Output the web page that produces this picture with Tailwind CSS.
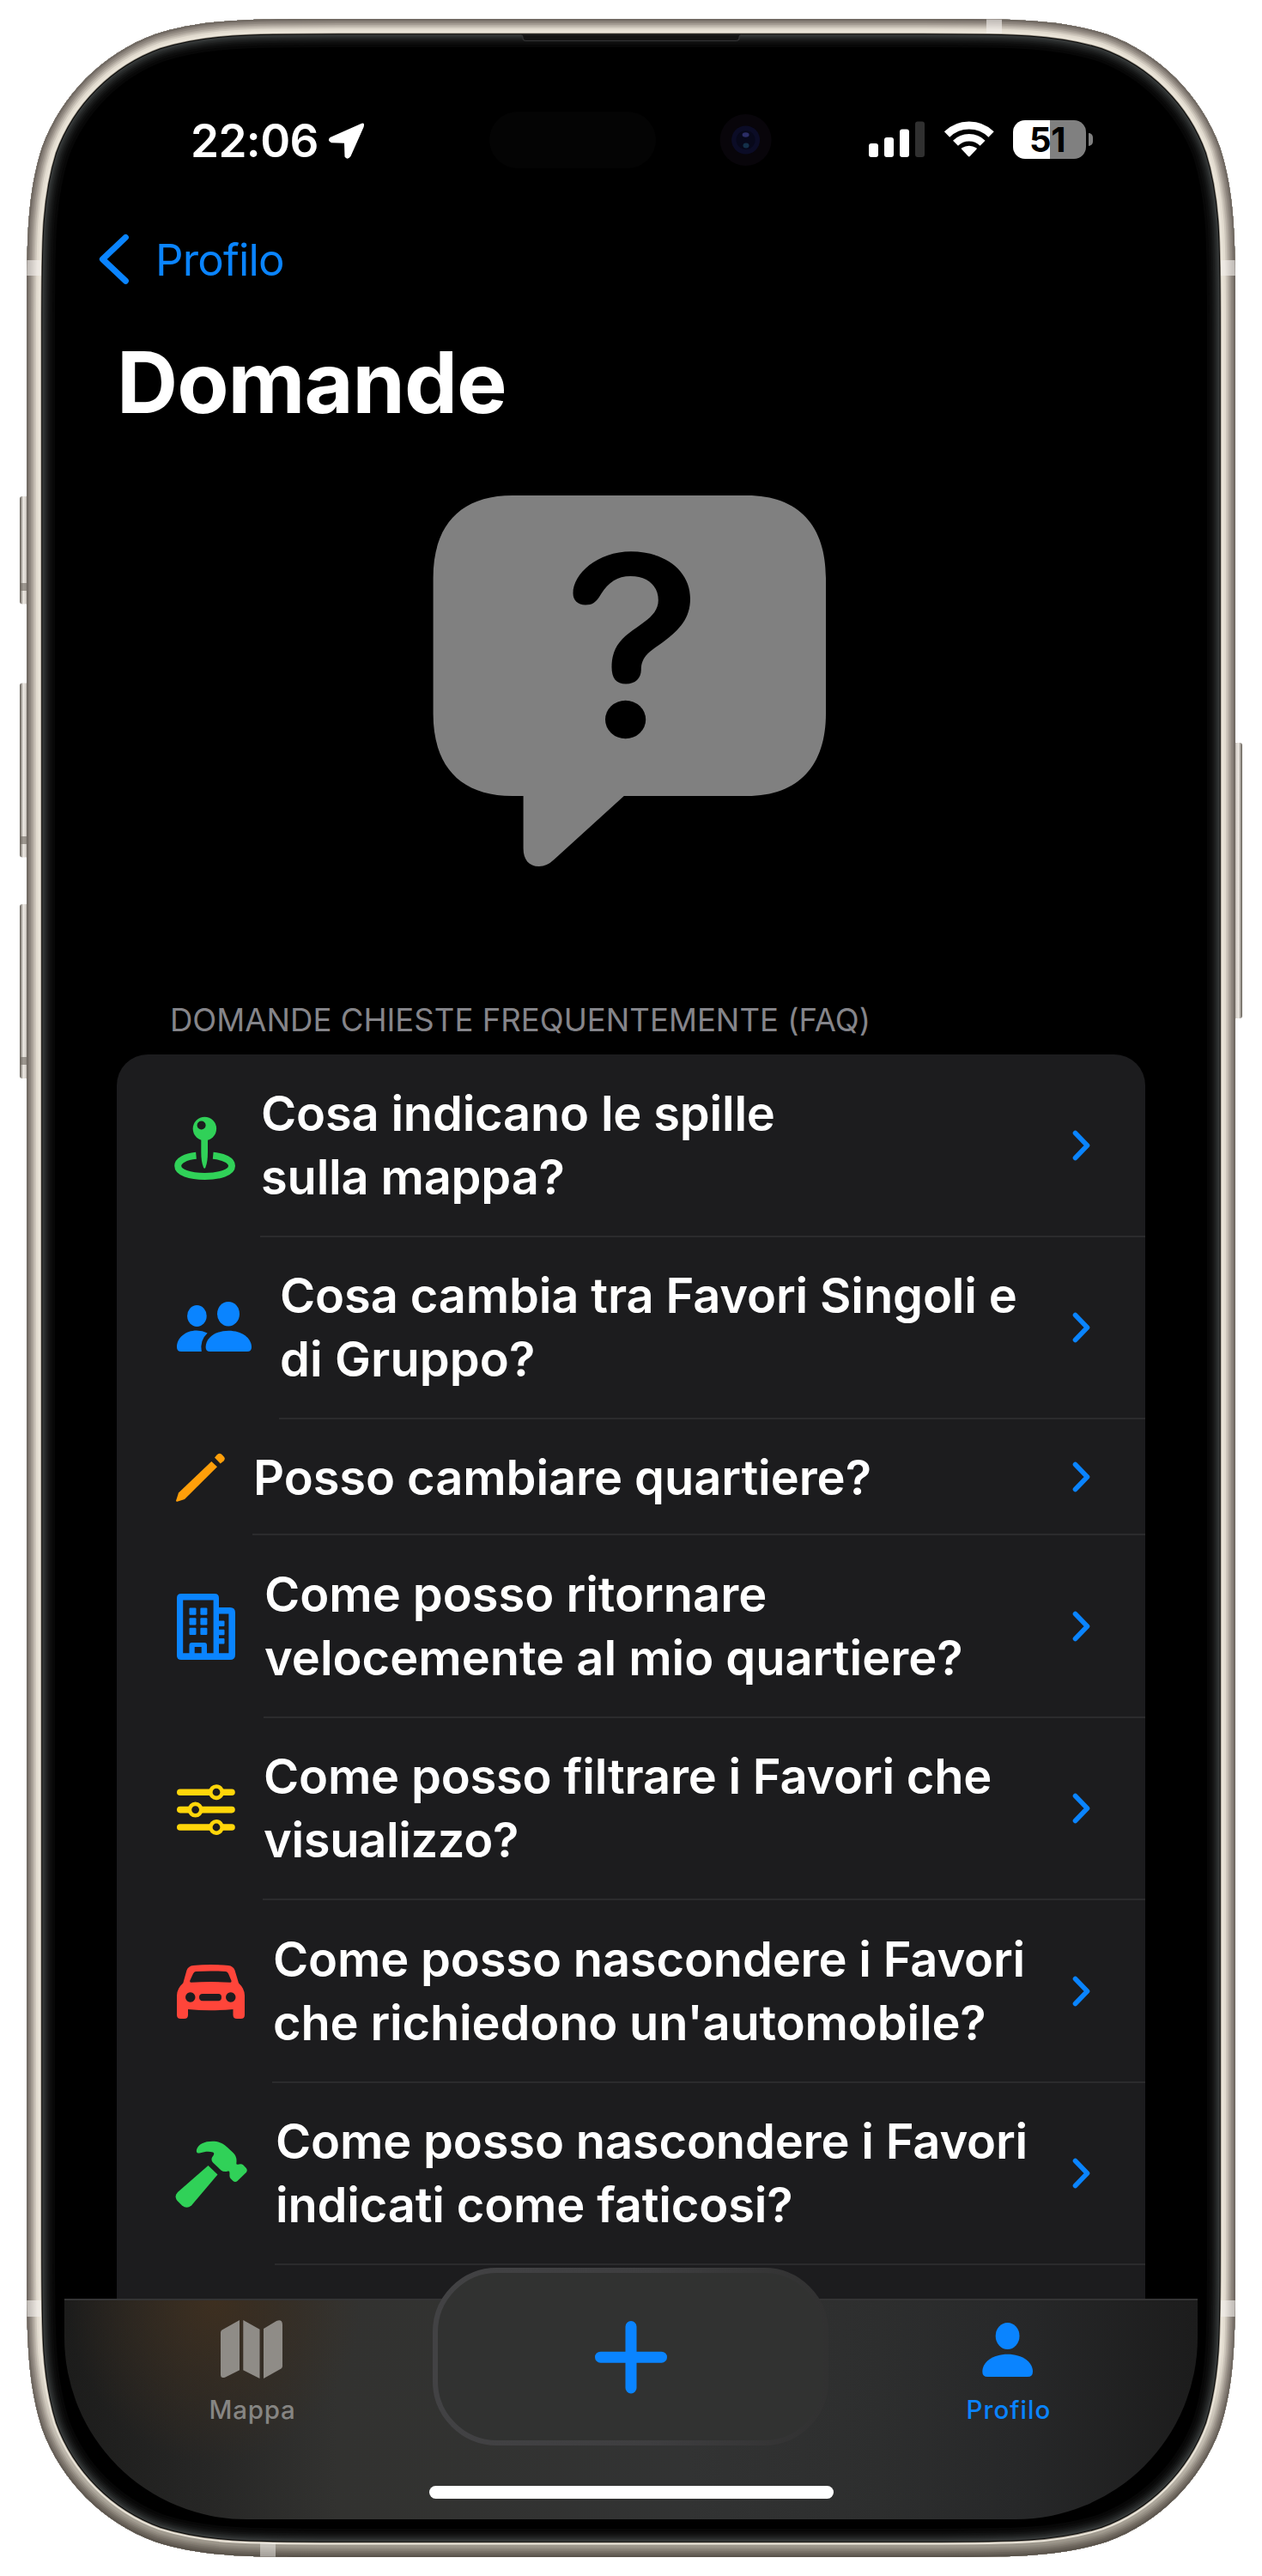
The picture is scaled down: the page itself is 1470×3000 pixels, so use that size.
<!DOCTYPE html>
<html lang="it">
<head>
<meta charset="utf-8">
<title>Domande</title>
<script src="https://cdn.jsdelivr.net/npm/@tailwindcss/browser@4"></script>
</head>
<body class="bg-white font-['Inter',sans-serif]">
<div class="relative w-[1470px] h-[3000px] overflow-hidden">

  <!-- Phone body -->
  <svg class="absolute inset-0" width="1470" height="3000" viewBox="0 0 1470 3000" fill="none">
    <defs>
      <path id="body" d="M394.8 22H1075.200C1180 22 1232.300 22 1288.700 39.800C1350.300 62.200 1398.800 110.700 1421.200 172.300C1439 228.700 1439 281 1439 385.800V2614.200C1439 2719 1439 2771.300 1421.200 2827.700C1398.800 2889.300 1350.300 2937.800 1288.700 2960.200C1232.300 2978 1180 2978 1075.200 2978H394.800C290 2978 237.700 2978 181.300 2960.200C119.700 2937.800 71.200 2889.300 48.800 2827.700C31 2771.300 31 2719 31 2614.200V385.800C31 281 31 228.700 48.800 172.300C71.200 110.700 119.700 62.200 181.300 39.800C237.700 22 290 22 394.800 22Z"/>
      <clipPath id="bodyClip"><use href="#body"/></clipPath>
      <linearGradient id="key" x1="0" x2="1"><stop offset="0" stop-color="#5d574f"/><stop offset=".35" stop-color="#efebe5"/><stop offset="1" stop-color="#a39b94"/></linearGradient>
      <linearGradient id="keyR" x1="1" x2="0"><stop offset="0" stop-color="#5d574f"/><stop offset=".35" stop-color="#efebe5"/><stop offset="1" stop-color="#a39b94"/></linearGradient>
      <linearGradient id="shade" x1="0" y1="22" x2="0" y2="2978" gradientUnits="userSpaceOnUse"><stop offset=".92" stop-color="#3a352b" stop-opacity="0"/><stop offset=".995" stop-color="#3a352b" stop-opacity=".42"/></linearGradient>
    </defs>
    <g fill="url(#key)"><rect x="23" y="578" width="12" height="125.500" rx="3"/><rect x="23" y="795.500" width="12" height="203" rx="3"/><rect x="23" y="1053" width="12" height="203" rx="3"/></g>
    <g fill="#6d655e" opacity=".6"><rect x="24" y="679" width="7" height="9"/><rect x="24" y="974" width="7" height="9"/><rect x="24" y="1231" width="7" height="9"/></g>
    <rect x="1435" y="865" width="12" height="321" rx="3" fill="url(#keyR)"/>
    <g clip-path="url(#bodyClip)">
      <use href="#body" fill="#000"/>
      <use href="#body" stroke="#070707" stroke-width="66"/>
      <use href="#body" stroke="#0c0c0c" stroke-width="60"/>
      <use href="#body" stroke="#121313" stroke-width="55"/>
      <use href="#body" stroke="#1a1b1b" stroke-width="51"/>
      <use href="#body" stroke="#232525" stroke-width="47"/>
      <use href="#body" stroke="#2d3030" stroke-width="43"/>
      <use href="#body" stroke="#373a3a" stroke-width="39.500"/>
      <use href="#body" stroke="#080807" stroke-width="36.500"/>
      <use href="#body" stroke="#8f887d" stroke-width="34.500"/>
      <use href="#body" stroke="#eae4d8" stroke-width="33"/>
      <use href="#body" stroke="#e2dbcf" stroke-width="27"/>
      <use href="#body" stroke="#cdc6bb" stroke-width="22"/>
      <use href="#body" stroke="#b8b0a6" stroke-width="18"/>
      <use href="#body" stroke="#a29a91" stroke-width="14"/>
      <use href="#body" stroke="#8e867e" stroke-width="10"/>
      <use href="#body" stroke="#7f7770" stroke-width="6"/>
      <use href="#body" stroke="#6f6861" stroke-width="3"/>
      <use href="#body" stroke="url(#shade)" stroke-width="29"/>
      <g fill="#f2efec" fill-opacity=".62"><rect x="31" y="303" width="17" height="18"/><rect x="1422" y="303" width="17" height="18"/><rect x="31" y="2679" width="17" height="19"/><rect x="1422" y="2679" width="17" height="19"/><rect x="1149" y="22" width="18" height="17"/><rect x="303" y="2961" width="18" height="17" fill-opacity=".5"/></g>
    </g>
    <path d="M606 40.500Q609 41 609 44Q609 47.500 613 47.500H857Q861 47.500 861 44Q861 41 864 40.500" fill="#131313" stroke="#333435" stroke-width="1.200"/>
    <!-- Sensor pill and camera -->
    <rect x="570" y="130" width="194" height="66" rx="33" fill="#040404"/>
    <circle cx="868.600" cy="163" r="30" fill="#08050a"/>
    <circle cx="868.600" cy="163" r="16.500" fill="#0b0c26"/><circle cx="868.600" cy="163" r="11" fill="#07081a"/>
    <ellipse cx="868.600" cy="157" rx="4" ry="2.800" fill="#2b2d66"/><ellipse cx="869" cy="169.500" rx="3.500" ry="3" fill="#14304a"/>
  </svg>

  <!-- Display -->
  <div class="absolute left-[75px] top-[66px] w-[1320px] h-[2868px] overflow-hidden rounded-b-[212px] flex flex-col text-white">
    <!-- Status bar -->
    <header class="h-[196px] shrink-0 flex pl-[147px] pt-[65px]">
      <div class="w-[158px] text-[53px] leading-[66px] font-semibold tracking-[-0.6px] whitespace-nowrap">22:06</div>
      <svg class="shrink-0 mt-[10px]" width="48" height="46" viewBox="381 141 48 46" fill="#fff"><path d="M420.500 144.500Q426.500 141.500 424.600 148L409.500 182Q405.500 187 402.500 182.500L402 166.800L387 166.300Q381.500 163.500 385.500 160Z"/></svg>
      <svg class="shrink-0 ml-[582px] mt-[6px]" width="70" height="50" viewBox="1010 137 70 50" fill="#fff"><rect x="1012" y="167" width="11" height="16" rx="3"/><rect x="1030" y="160" width="11" height="23" rx="3"/><rect x="1048" y="150.500" width="11" height="32.500" rx="3"/><rect x="1066" y="141.500" width="11" height="41.500" rx="3" fill="#303030"/></svg>
      <svg class="shrink-0 ml-[18px] mt-[6px]" width="62" height="50" viewBox="1098 137 62 50"><path d="M1103 156.500A37 37 0 0 1 1154.600 156.500" stroke="#fff" stroke-width="9" fill="none"/><path d="M1113 166.800A22.500 22.500 0 0 1 1144.600 166.800" stroke="#fff" stroke-width="8.500" fill="none"/><path d="M1120.300 174Q1119 173 1120.300 172.300Q1128.800 167 1137.300 172.300Q1138.600 173 1137.300 174L1130 181.800Q1128.800 183 1127.600 181.800Z" fill="#fff"/></svg>
      <div class="shrink-0 ml-[20px] mt-[9px] w-[85px] h-[45px] rounded-[14px] bg-[linear-gradient(90deg,#fff_43px,#808080_43px)] text-black text-[40px] leading-[46px] font-bold tracking-[-0.4px] pl-[19px] whitespace-nowrap">51</div>
      <div class="shrink-0 ml-[3px] mt-[24px] w-[5px] h-[15px] rounded-r-full bg-[#808080]"></div>
    </header>

    <!-- Back navigation -->
    <nav class="h-[82px] shrink-0 flex items-center pl-[36px] text-[#0a84ff]">
      <svg class="shrink-0" width="70" height="70" viewBox="111 268 70 70" fill="none" stroke="currentColor" stroke-width="7.200" stroke-linecap="round" stroke-linejoin="round"><path d="M146.300 276.500L119.500 301.800L146.300 327.200"/></svg>
      <div class="text-[51px] leading-[64px] tracking-[-0.85px] whitespace-nowrap">Profilo</div>
    </nav>
    <h1 class="h-[192px] shrink-0 pl-[61px] pt-[42px] text-[98.500px] leading-[120px] font-bold tracking-[-1px] whitespace-nowrap">Domande</h1>

    <div class="h-[614px] shrink-0 pl-[425px] pt-[34px]">
      <svg width="470" height="440" viewBox="500 570 470 440">
        <path fill="#808080" d="M504.600 673C504.600 613 535 577 597 577H870C931 577 962 613 962 673V831C962 891 931 927 870 927H726.800L645.400 1001Q637 1009 627.900 1009C616 1009 609.600 1001 609.600 988V927H597C535 927 504.600 891 504.600 831Z"/>
        <path fill="#000" d="M667.500 691C667.500 668 696 642.500 735 642.300C775 642.300 804 665 804 697C804 720 792 733 772 748C756 759 746.800 765 746.800 780C746.800 790 740 796.500 729 796.500C718 796.500 712.500 790 712.500 777C712.500 758 720 746 737 734C756 721 766.800 713 766.800 699C766.800 682 754 671 734.500 671C719 671 709 678 700 692C694 702 690 704.500 682 704.500C673 704.500 667.500 699 667.500 691Z"/>
        <ellipse cx="728.600" cy="838" rx="23.600" ry="22.300" fill="#000"/>
      </svg>
    </div>

    <h2 class="h-[78px] shrink-0 pl-[123px] pt-[13px] text-[36.500px] leading-[50px] text-[#85858a] tracking-[0.03px] whitespace-nowrap">DOMANDE CHIESTE FREQUENTEMENTE (FAQ)</h2>

    <ul class="ml-[61px] w-[1198px] h-[1470px] shrink-0 rounded-t-[36px] bg-[#1c1c1e] text-[56px] leading-[74px] font-semibold tracking-[-0.14px] whitespace-nowrap">
      <li class="flex h-[213px]">
        <svg class="shrink-0" width="167" height="213" viewBox="136 1228 167 213"><circle cx="238.400" cy="1314.500" r="13.700" fill="#30d158"/><circle cx="234.600" cy="1310.500" r="5" fill="#1c1c1e"/><path d="M234.300 1326H242V1342Q242 1353 239.400 1359.500Q238.200 1362 237 1359.500Q234.300 1353 234.300 1342Z" fill="#30d158"/><path d="M228.500 1345.800C216 1347 207.200 1351.500 207.200 1357.800C207.200 1365.500 221 1370 238.500 1370S270 1365.500 270 1357.800C270 1351.500 261 1347 248.200 1345.800" fill="none" stroke="#30d158" stroke-width="8"/></svg>
        <div class="flex-1 flex items-center justify-between pl-px pr-[62px] border-b-2 border-[#2b2b2d]"><p class="tracking-[-0.2px]">Cosa indicano le spille<br>sulla mappa?</p><svg class="shrink-0" width="26" height="40" viewBox="0 0 26 40" fill="none" stroke="#0a84ff" stroke-width="5.600" stroke-linecap="round" stroke-linejoin="round"><path d="M6.500 5.500L20.500 20L6.500 34.500"/></svg></div>
      </li>
      <li class="flex h-[212px]">
        <svg class="shrink-0" width="189" height="212" viewBox="136 1441 189 212" fill="#0a84ff"><ellipse cx="229.400" cy="1532.500" rx="11.300" ry="12.500"/><ellipse cx="266" cy="1530.200" rx="13" ry="14.300"/><path d="M239.600 1569C239.600 1558 251 1549.700 266.300 1549.700S293 1558 293 1569Q293 1574 288 1574H244.600Q239.600 1574 239.600 1569Z"/><path d="M206 1569C206 1558 216 1549.500 229 1549.500Q236 1549.500 241.600 1552.500Q232.500 1561 234.800 1574H211Q206 1574 206 1569Z"/></svg>
        <div class="flex-1 flex items-center justify-between pl-px pr-[62px] border-b-2 border-[#2b2b2d]"><p>Cosa cambia tra Favori Singoli e<br><span class="tracking-[0.1px]">di Gruppo?</span></p><svg class="shrink-0" width="26" height="40" viewBox="0 0 26 40" fill="none" stroke="#0a84ff" stroke-width="5.600" stroke-linecap="round" stroke-linejoin="round"><path d="M6.500 5.500L20.500 20L6.500 34.500"/></svg></div>
      </li>
      <li class="flex h-[135px]">
        <svg class="shrink-0" width="158" height="135" viewBox="136 1653 158 135" fill="#ff9f0a"><path d="M246.300 1702L253 1708.200L215 1746L206.500 1748.700Q204.800 1749 205.200 1747.200L208 1738.500Z"/><path d="M250 1697.500L252.500 1694.500Q255.200 1691.500 258.500 1694L260.800 1696.500Q263 1699 260.500 1701.500L256.700 1704.600Z"/></svg>
        <div class="flex-1 flex items-center justify-between pl-px pr-[62px] border-b-2 border-[#2b2b2d]"><p class="tracking-[-0.08px] pt-[2px]">Posso cambiare quartiere?</p><svg class="shrink-0" width="26" height="40" viewBox="0 0 26 40" fill="none" stroke="#0a84ff" stroke-width="5.600" stroke-linecap="round" stroke-linejoin="round"><path d="M6.500 5.500L20.500 20L6.500 34.500"/></svg></div>
      </li>
      <li class="flex h-[213px]">
        <svg class="shrink-0" width="171" height="213" viewBox="136 1788 171 213" fill="#0a84ff"><path fill-rule="evenodd" d="M211 1856H250Q255 1856 255 1861V1872H268Q274 1872 274 1878V1927Q274 1933 268 1933H211Q206 1933 206 1928V1861Q206 1856 211 1856ZM213.200 1863.500V1925.300H220.500V1916Q220.500 1913 223.500 1913H238Q241 1913 241 1916V1925.300H248.600V1863.500ZM226.700 1918H234.700V1925.300H226.700ZM255 1879.600V1925.300H266.400V1879.600Z"/><g><rect x="220.500" y="1872.500" width="8" height="8.300" rx="1"/><rect x="233.400" y="1872.500" width="8" height="8.300" rx="1"/><rect x="220.500" y="1884.200" width="8" height="8.300" rx="1"/><rect x="233.400" y="1884.200" width="8" height="8.300" rx="1"/><rect x="220.500" y="1895.800" width="8" height="8.300" rx="1"/><rect x="233.400" y="1895.800" width="8" height="8.300" rx="1"/><rect x="254" y="1887.500" width="7.500" height="6.500" rx="1"/><rect x="254" y="1897.800" width="7.500" height="6.500" rx="1"/><rect x="254" y="1908" width="7.500" height="6.500" rx="1"/></g></svg>
        <div class="flex-1 flex items-center justify-between pl-px pr-[62px] border-b-2 border-[#2b2b2d]"><p class="tracking-[-0.03px]">Come posso ritornare<br>velocemente al mio quartiere?</p><svg class="shrink-0" width="26" height="40" viewBox="0 0 26 40" fill="none" stroke="#0a84ff" stroke-width="5.600" stroke-linecap="round" stroke-linejoin="round"><path d="M6.500 5.500L20.500 20L6.500 34.500"/></svg></div>
      </li>
      <li class="flex h-[212px]">
        <svg class="shrink-0" width="170" height="212" viewBox="136 2001 170 212" stroke="#ffd60a" fill="none"><path d="M209.800 2087.200H270M209.800 2107.600H270M209.800 2128H270" stroke-width="7.600" stroke-linecap="round"/><g fill="#1c1c1e" stroke-width="4.600"><circle cx="252" cy="2087.200" r="6.700"/><circle cx="227.600" cy="2107.600" r="6.700"/><circle cx="252" cy="2128" r="6.700"/></g></svg>
        <div class="flex-1 flex items-center justify-between pl-px pr-[62px] border-b-2 border-[#2b2b2d]"><p class="tracking-[-0.22px]">Come posso filtrare i Favori che<br><span class="tracking-[-0.36px]">visualizzo?</span></p><svg class="shrink-0" width="26" height="40" viewBox="0 0 26 40" fill="none" stroke="#0a84ff" stroke-width="5.600" stroke-linecap="round" stroke-linejoin="round"><path d="M6.500 5.500L20.500 20L6.500 34.500"/></svg></div>
      </li>
      <li class="flex h-[213px]">
        <svg class="shrink-0" width="181" height="213" viewBox="136 2213 181 213" fill="#ff453a"><path fill-rule="evenodd" d="M225 2289Q245.500 2287 266 2289Q271.500 2289.600 273.500 2294.500L278 2309.500Q285 2316 285 2324V2346.500Q285 2351 280.500 2351H276Q271.500 2351 271.500 2346.500V2340Q245 2342.500 219 2340V2346.500Q219 2351 214.500 2351H210.500Q206 2351 206 2346.500V2324Q206 2316 213.300 2309.500L217.500 2294.500Q219.500 2289.600 225 2289ZM228 2296Q245.500 2294.800 263 2296Q265 2296.200 266 2298.500L269.400 2306.500Q270 2308.800 268 2308.700Q245.500 2307.500 223 2308.700Q220.600 2308.800 221.300 2306.500L225 2298.500Q226 2296.200 228 2296ZM221.700 2320.300A5.700 5.700 0 1 0 221.800 2320.300ZM268.700 2320.300A5.700 5.700 0 1 0 268.800 2320.300ZM236 2322Q232 2322 232 2326T236 2330.300H254Q258 2330.300 258 2326T254 2322Z"/></svg>
        <div class="flex-1 flex items-center justify-between pl-px pr-[62px] border-b-2 border-[#2b2b2d]"><p class="tracking-[-0.18px]">Come posso nascondere i Favori<br>che richiedono un'automobile?</p><svg class="shrink-0" width="26" height="40" viewBox="0 0 26 40" fill="none" stroke="#0a84ff" stroke-width="5.600" stroke-linecap="round" stroke-linejoin="round"><path d="M6.500 5.500L20.500 20L6.500 34.500"/></svg></div>
      </li>
      <li class="flex h-[212px]">
        <svg class="shrink-0" width="184" height="212" viewBox="136 2426 184 212" fill="#30d158"><path d="M242.500 2522L253.500 2532.500L223 2568.500Q217.500 2573 212 2568.500L206.500 2563Q202.500 2558 207 2553Z"/><path d="M229 2503.500C231 2497 238 2493.700 247.500 2493.700C255 2493.700 260 2496 264.500 2500.500L271.500 2507Q276.500 2511.500 275.300 2519.500Q275.300 2521 277 2520.800L280 2520.300Q282 2520.200 283.500 2521.500L286.800 2525Q288.700 2527.500 286.800 2530L276.500 2540Q274 2542 271.500 2540L268.500 2537Q267 2535 267.500 2532L267.300 2529.500Q267.300 2528.300 265.500 2528.600Q260.500 2530 257.500 2527.500L248 2518.500Q245.500 2515.500 247 2512.500Q251 2508 248 2506.500C243 2505 238 2505.800 233.500 2507.300Q228 2508.500 229 2503.500Z"/></svg>
        <div class="flex-1 flex items-center justify-between pl-px pr-[62px] border-b-2 border-[#2b2b2d]"><p class="tracking-[-0.18px]">Come posso nascondere i Favori<br>indicati come faticosi?</p><svg class="shrink-0" width="26" height="40" viewBox="0 0 26 40" fill="none" stroke="#0a84ff" stroke-width="5.600" stroke-linecap="round" stroke-linejoin="round"><path d="M6.500 5.500L20.500 20L6.500 34.500"/></svg></div>
      </li>
    </ul>

    <!-- Tab bar floats above the list -->
    <footer class="absolute inset-x-0 bottom-0 h-[257px] border-t-2 border-[#343435] bg-[radial-gradient(ellipse_170px_190px_at_175px_0px,#3d2f20_0%,#3d2f2000_100%),linear-gradient(90deg,#1c1c1b_0%,#262625_12%,#323230_24%,#323333_55%,#2d2e2e_72%,#272829_84%,#1c1c1c_100%)]">
      <div class="flex h-full justify-between pl-[159px] pr-[160px]">
        <div class="w-[120px] pt-[19px] flex flex-col items-center text-[#868583]">
          <svg width="80" height="76" viewBox="254 2698 80 76" fill="#8f8c87"><path d="M257 2716.500Q257 2714.500 258.500 2713.500L279 2702V2760.200L262.500 2768.500Q257 2770.500 257 2765.500ZM283.300 2702L302.500 2712.800V2770L283.300 2760.200ZM307 2712L322 2703Q329 2700.500 329 2707.500V2755.500Q329 2757.500 327.500 2758.500L307 2770Z"/></svg>
          <div class="mt-[14px] text-[29.500px] leading-[36px] font-medium tracking-[0.8px] whitespace-nowrap">Mappa</div>
        </div>
        <div class="w-[120px] pt-[19px] flex flex-col items-center text-[#0a84ff]">
          <svg width="80" height="76" viewBox="1135 2698 80 76" fill="currentColor"><ellipse cx="1173.600" cy="2720.500" rx="13.900" ry="15.500"/><path d="M1144.300 2762C1144.300 2751 1156 2741.700 1173.700 2741.700S1203 2751 1203 2762Q1203 2768 1197 2768H1150.300Q1144.300 2768 1144.300 2762Z"/></svg>
          <div class="mt-[14px] text-[29.500px] leading-[36px] font-medium tracking-[1.05px] whitespace-nowrap">Profilo</div>
        </div>
      </div>
    </footer>
    <svg class="absolute left-[429px] bottom-[86px]" width="461" height="207" viewBox="0 0 461 207" fill="none">
      <defs><linearGradient id="rim" x1="0" x2="1"><stop offset="0" stop-color="#424244"/><stop offset=".55" stop-color="#3e3e40"/><stop offset="1" stop-color="#313131"/></linearGradient></defs>
      <rect x="3" y="3" width="455" height="201" rx="72" fill="#313231" stroke="url(#rim)" stroke-width="6"/>
      <path d="M231 68.500V140M195.500 104.200H266.500" stroke="#0a84ff" stroke-width="13" stroke-linecap="round"/>
    </svg>
    <div class="absolute left-[425px] bottom-[24px] w-[471px] h-[15px] rounded-full bg-white"></div>
  </div>
</div>
</body>
</html>
